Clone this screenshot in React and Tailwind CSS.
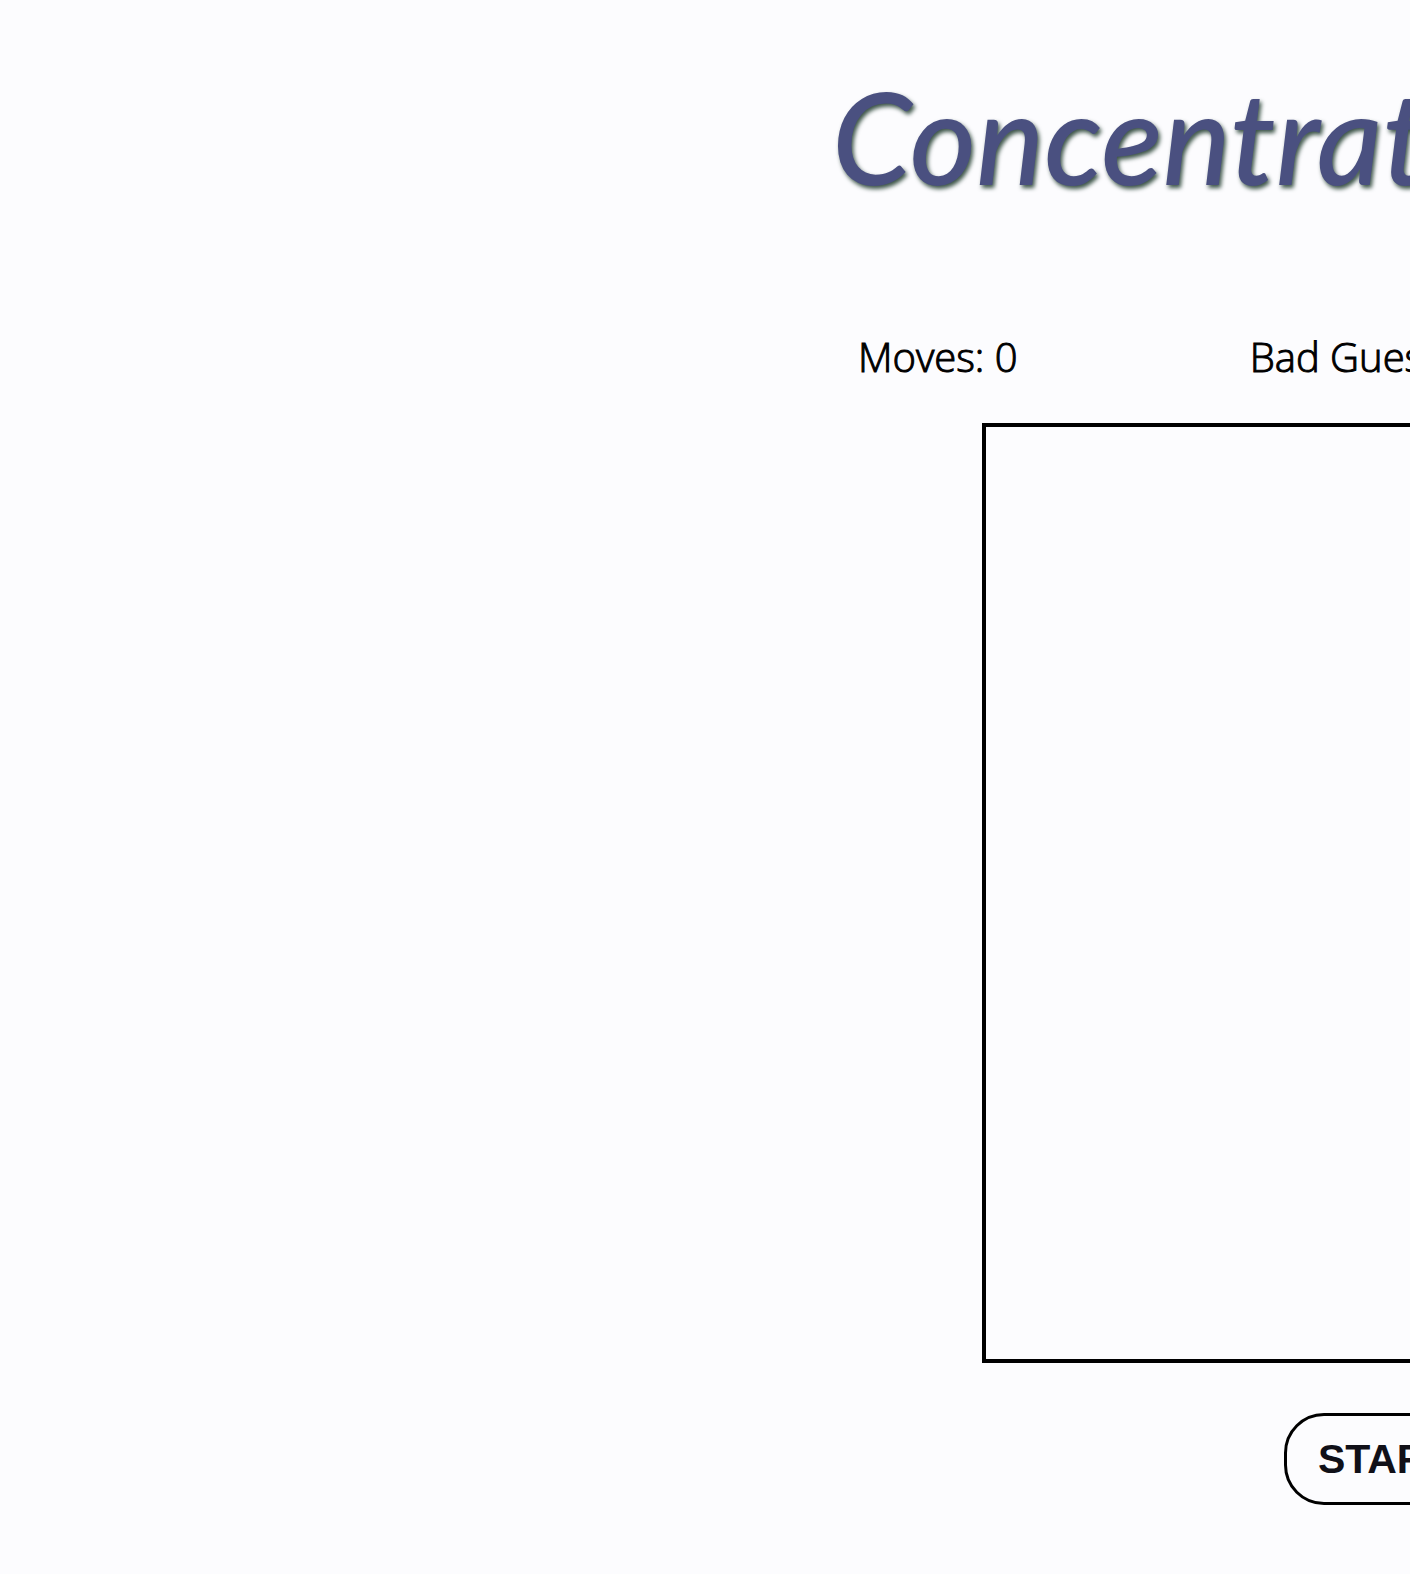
export default function App() {
  return (
    <div className="min-h-screen overflow-hidden bg-[#fcfcfe] text-black">
      <main className="ml-[59%] flex w-[1240px] flex-col items-center pt-[58px] pb-[69px]">
        <h1 className="w-full font-['Lato',sans-serif] text-[128px] leading-[156px] font-medium whitespace-nowrap text-[#4a5080] italic [text-shadow:2px_3px_4px_#3c5448]">
          Concentration
        </h1>
        <div className="mt-[111px] flex w-full gap-[232px] px-[26px] font-['Open_Sans',sans-serif] text-[40px] leading-[64px] font-light whitespace-nowrap [-webkit-text-stroke:1px_black]">
          <p>Moves: 0</p>
          <p>Bad Guesses: 0</p>
        </div>
        <section aria-label="Game board" className="mt-[34px] aspect-square w-[940px] border-4 border-black" />
        <button
          type="button"
          className="mt-[50px] rounded-[40px] border-[3px] border-black px-[31px] py-[18px] font-['Liberation_Sans',Arial,sans-serif] text-[41px] leading-[50px] font-bold whitespace-nowrap text-[#101018]"
        >
          START GAME
        </button>
      </main>
    </div>
  );
}
